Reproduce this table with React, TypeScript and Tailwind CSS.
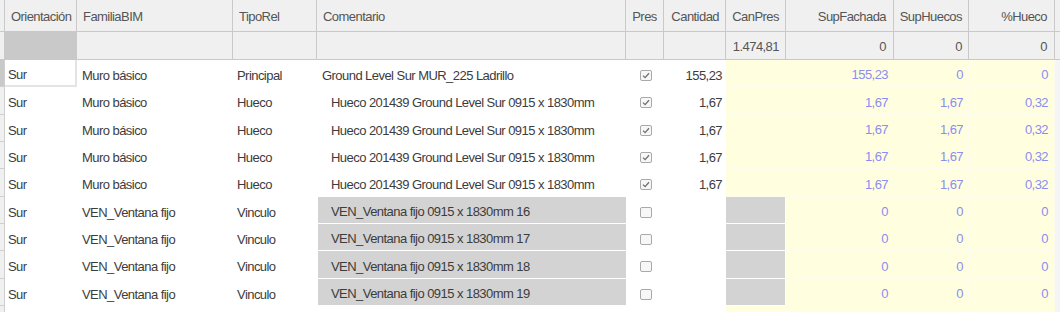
import React from 'react';

type Row = {
  fam: string;
  tipo: string;
  com: string;
  indent: boolean;
  link: boolean;
  checked: boolean;
  cant: string;
  fach: string;
  huecos: string;
  pct: string;
};

const hueco = (n: string): Row => ({
  fam: 'Muro básico', tipo: 'Hueco', com: `Hueco 201439 Ground Level Sur 0915 x 1830mm`,
  indent: true, link: false, checked: true, cant: '1,67', fach: '1,67', huecos: '1,67', pct: n,
});

const ven = (n: number): Row => ({
  fam: 'VEN_Ventana fijo', tipo: 'Vinculo', com: `VEN_Ventana fijo 0915 x 1830mm ${n}`,
  indent: true, link: true, checked: false, cant: '', fach: '0', huecos: '0', pct: '0',
});

const ROWS: Row[] = [
  {
    fam: 'Muro básico', tipo: 'Principal', com: 'Ground Level Sur MUR_225 Ladrillo',
    indent: false, link: false, checked: true, cant: '155,23', fach: '155,23', huecos: '0', pct: '0',
  },
  hueco('0,32'), hueco('0,32'), hueco('0,32'), hueco('0,32'),
  ven(16), ven(17), ven(18), ven(19),
];

const GRID = 'grid grid-cols-[5px_72px_156px_84px_309px_38px_62px_60px_108px_75px_86px_5px]';
const FONT = "font-['Liberation_Sans',Arial,sans-serif]";

const Check = ({ on }: { on: boolean }) => (
  <span className="w-[12px] h-[11px] rounded-[2px] border border-[#a9a9a9] bg-[#f7f7f7] flex items-center justify-center">
    {on && (
      <svg width="8" height="7" viewBox="0 0 8 7">
        <path d="M1 3.6 L3.1 5.6 L7 1.2" fill="none" stroke="#6f6f6f" strokeWidth="1.3" />
      </svg>
    )}
  </span>
);

const hd = 'h-[32px] flex items-center pt-[2px] border-r border-b border-[#c9c9c9] bg-[#f0f0f0] text-[#555]';
const fl = 'h-[28px] flex items-center pt-[2px] border-r border-b border-[#c9c9c9] bg-[#f0f0f0] text-[#555]';
const yl = 'flex items-center justify-end pt-[4px] pr-[5px] bg-[#ffffe0] border-r border-b border-[#fbfbee] text-[#8c8cf2]';
const td = 'flex items-center pt-[4px]';

export default function App() {
  return (
    <div className={`w-[1060px] h-[312px] overflow-hidden bg-white text-[13px] tracking-[-0.55px] whitespace-nowrap ${FONT}`}>
      {/* Header */}
      <div className={GRID}>
        <div className="h-[32px] bg-[#f0f0f0] border-r border-b border-[#c9c9c9]" />
        <div className={`${hd} pl-[6px]`}>Orientación</div>
        <div className={`${hd} pl-[6px]`}>FamiliaBIM</div>
        <div className={`${hd} pl-[6px]`}>TipoRel</div>
        <div className={`${hd} pl-[6px]`}>Comentario</div>
        <div className={`${hd} justify-center`}>Pres</div>
        <div className={`${hd} justify-end pr-[6px]`}>Cantidad</div>
        <div className={`${hd} justify-end pr-[6px]`}>CanPres</div>
        <div className={`${hd} justify-end pr-[7px]`}>SupFachada</div>
        <div className={`${hd} justify-end pr-[6px]`}>SupHuecos</div>
        <div className={`${hd} justify-end pr-[7px]`}>%Hueco</div>
        <div className="h-[32px] bg-[#f0f0f0] border-b border-[#c9c9c9]" />
      </div>

      {/* Filter row */}
      <div className={GRID}>
        <div className="h-[28px] bg-[#f0f0f0] border-r border-b border-[#c9c9c9]" />
        <div className={`${fl} !bg-[#c9c9c9]`} />
        <div className={fl} />
        <div className={fl} />
        <div className={fl} />
        <div className={fl} />
        <div className={fl} />
        <div className={`${fl} justify-end pr-[6px]`}>1.474,81</div>
        <div className={`${fl} justify-end pr-[7px]`}>0</div>
        <div className={`${fl} justify-end pr-[6px]`}>0</div>
        <div className={`${fl} justify-end pr-[7px]`}>0</div>
        <div className="h-[28px] bg-[#f0f0f0] border-b border-[#c9c9c9]" />
      </div>

      {/* Data rows */}
      {ROWS.map((r, i) => (
        <div key={i} className={`${GRID} h-[27.33px] text-[#3c3c3c]`}>
          <div className={`border-r border-b border-[#cfcfcf] ${i === 0 ? 'bg-[#c9c9c9]' : 'bg-[#f0f0f0]'}`} />
          <div className={`${td} pl-[3px] ${i === 0 ? 'border-r-2 border-b-2 border-[#e4e4e4]' : ''}`}>Sur</div>
          <div className={`${td} pl-[5px]`}>{r.fam}</div>
          <div className={`${td} pl-[4px]`}>{r.tipo}</div>
          <div
            className={`${td} ${r.link ? 'bg-[#d3d3d3] border-b border-white ml-px pl-[13px]' : r.indent ? 'pl-[14px]' : 'pl-[5px]'}`}
          >
            {r.com}
          </div>
          <div className={`${td} justify-center pl-px`}>
            <Check on={r.checked} />
          </div>
          <div className={`${td} justify-end pr-[4px]`}>{r.cant}</div>
          <div className={r.link ? 'bg-[#d3d3d3] border-b border-r border-white' : 'bg-[#ffffe0] border-r border-b border-[#fbfbee]'} />
          <div className={yl}>{r.fach}</div>
          <div className={yl}>{r.huecos}</div>
          <div className={`${yl} pr-[6px]`}>{r.pct}</div>
          <div className="bg-[#f5f5f5]" />
        </div>
      ))}

      {/* partially visible row */}
      <div className={`${GRID} h-[27px]`}>
        <div className="bg-[#f0f0f0] border-r border-[#cfcfcf]" />
        <div className="col-span-6" />
        <div className="bg-[#ffffe0]" />
        <div className="bg-[#ffffe0]" />
        <div className="bg-[#ffffe0]" />
        <div className="bg-[#ffffe0]" />
        <div className="bg-[#f5f5f5]" />
      </div>
    </div>
  );
}
